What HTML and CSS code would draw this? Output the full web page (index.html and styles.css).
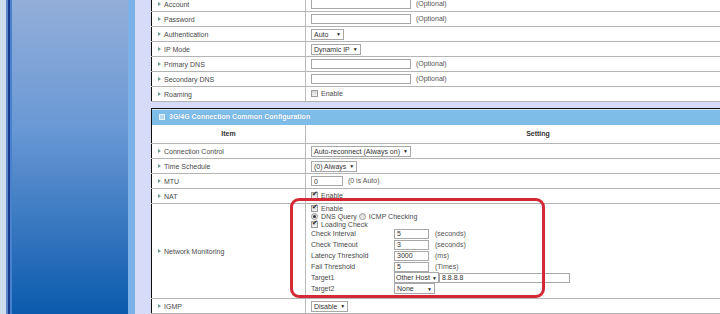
FILE: index.html
```html
<!DOCTYPE html>
<html lang="en">
<head>
    <meta charset="UTF-8">
    <title>3G/4G WAN Setting</title>
    <link rel="stylesheet" href="styles.css">
</head>
<body>
<div class="page">
    <div class="frame">
        <div class="menu"></div>
    </div>

    <div class="content">
        <table class="cfg cfg-top">
            <colgroup><col class="col-item"><col></colgroup>
            <tr>
                <td class="item">Account</td>
                <td class="setting"><input type="text" class="txt txt-long"> <span class="hint">(Optional)</span></td>
            </tr>
            <tr>
                <td class="item">Password</td>
                <td class="setting"><input type="password" class="txt txt-long"> <span class="hint">(Optional)</span></td>
            </tr>
            <tr>
                <td class="item">Authentication</td>
                <td class="setting"><span class="select sel-auth">Auto</span></td>
            </tr>
            <tr>
                <td class="item">IP Mode</td>
                <td class="setting"><span class="select">Dynamic IP</span></td>
            </tr>
            <tr>
                <td class="item">Primary DNS</td>
                <td class="setting"><input type="text" class="txt txt-long"> <span class="hint">(Optional)</span></td>
            </tr>
            <tr>
                <td class="item">Secondary DNS</td>
                <td class="setting"><input type="text" class="txt txt-long"> <span class="hint">(Optional)</span></td>
            </tr>
            <tr>
                <td class="item">Roaming</td>
                <td class="setting"><label class="opt"><input type="checkbox"> Enable</label></td>
            </tr>
        </table>

        <table class="cfg cfg-common">
            <colgroup><col class="col-item"><col></colgroup>
            <tr>
                <th colspan="2" class="title"><span class="title-icon"></span>3G/4G Connection Common Configuration</th>
            </tr>
            <tr class="heads">
                <th>Item</th>
                <th>Setting</th>
            </tr>
            <tr>
                <td class="item">Connection Control</td>
                <td class="setting"><span class="select">Auto-reconnect (Always on)</span></td>
            </tr>
            <tr>
                <td class="item">Time Schedule</td>
                <td class="setting"><span class="select">(0) Always</span></td>
            </tr>
            <tr>
                <td class="item">MTU</td>
                <td class="setting"><input type="text" class="txt txt-mtu" value="0"> <span class="hint">(0 is Auto)</span></td>
            </tr>
            <tr>
                <td class="item">NAT</td>
                <td class="setting"><label class="opt"><input type="checkbox" checked> Enable</label></td>
            </tr>
            <tr class="monitor">
                <td class="item">Network Monitoring</td>
                <td class="setting">
                    <div class="mark"></div>
                    <div class="line"><label class="opt"><input type="checkbox" checked> Enable</label></div>
                    <div class="line">
                        <label class="opt"><input type="radio" name="probe" checked> DNS Query</label>
                        <label class="opt"><input type="radio" name="probe"> ICMP Checking</label>
                    </div>
                    <div class="line"><label class="opt"><input type="checkbox" checked> Loading Check</label></div>
                    <div class="sub">
                        <span>Check Interval</span><input type="text" class="txt txt-num" value="5"><span class="hint">(seconds)</span>
                        <span>Check Timeout</span><input type="text" class="txt txt-num" value="3"><span class="hint">(seconds)</span>
                        <span>Latency Threshold</span><input type="text" class="txt txt-num" value="3000"><span class="hint">(ms)</span>
                        <span>Fail Threshold</span><input type="text" class="txt txt-num" value="5"><span class="hint">(Times)</span>
                        <span>Target1</span><span class="select sel-host">Other Host</span><input type="text" class="txt txt-host" value="8.8.8.8">
                        <span>Target2</span><span class="select sel-target">None</span><span></span>
                    </div>
                </td>
            </tr>
            <tr>
                <td class="item">IGMP</td>
                <td class="setting"><span class="select">Disable</span></td>
            </tr>
        </table>
    </div>
</div>
</body>
</html>
```

FILE: styles.css
```css
body {
    margin: 0;
    font-family: "Liberation Sans", Arial, sans-serif;
    font-size: 7px;
    color: #4a4a4a;
    background: #d6dcf8;
    overflow: hidden;
}
.page {
    display: flex;
    height: 314px;
}
.frame {
    flex: none;
    display: flex;
    padding-left: 6px;
    background: #cfdcee;
}
.menu {
    width: 122px;
    border-right: 7px solid #7cb0e8;
    background: linear-gradient(#93aed9, #6a99d5 40%, #0b5aad);
    box-shadow: inset 2px 0 #5b86c9, inset 4px 0 #173a8c, inset 6px 0 #4a80d0;
}
.content {
    padding-left: 16px;
    margin-top: -4px;
}

/* tables */
.cfg {
    width: 620px;
    table-layout: fixed;
    border-collapse: collapse;
    border: 1px solid #111;
    background: #fff;
}
.cfg-common {
    margin-top: 6px;
}
.col-item {
    width: 154px;
}
.cfg td {
    height: 14px;
    padding: 0;
    border-bottom: 1px solid #b4b4b4;
    vertical-align: middle;
}
.cfg .item {
    padding-left: 12px;
    border-right: 1px solid #bbb;
    position: relative;
}
.item::before {
    content: "";
    position: absolute;
    left: 6px;
    top: 50%;
    margin-top: -2px;
    border-left: 3px solid #6f9a96;
    border-top: 2px solid transparent;
    border-bottom: 2px solid transparent;
}
.cfg .setting {
    padding-left: 5px;
}
.title {
    padding: 0 0 0 7px;
    line-height: 16px;
    text-align: left;
    color: #fff;
    font-weight: bold;
    background: #7fbde9;
    box-shadow: inset 0 1px #d6e8f6;
    text-shadow: 0 0 1px #5d97c4;
}
.title-icon {
    display: inline-block;
    width: 4px;
    height: 4px;
    margin-right: 4px;
    border: 1px solid #e8f2fb;
    background: #b9d9f0;
    vertical-align: -1px;
}
.heads th {
    padding: 0;
    line-height: 18px;
    font-weight: bold;
    color: #333;
    border-bottom: 1px solid #b4b4b4;
}
.heads th:first-child {
    border-right: 1px solid #bbb;
}

/* form bits */
.txt {
    box-sizing: border-box;
    height: 10px;
    margin: 0;
    padding: 0 2px;
    border: 1px solid #a8a8a8;
    font: 7px "Liberation Sans", Arial, sans-serif;
    color: #333;
    vertical-align: middle;
}
.txt-long {
    width: 100px;
}
.txt-mtu {
    width: 32px;
}
.txt-num {
    width: 35px;
}
.txt-host {
    width: 131px;
    margin-left: 4px;
}
.hint {
    color: #555;
    margin-left: 3px;
}
.select {
    display: inline-flex;
    align-items: center;
    justify-content: space-between;
    box-sizing: border-box;
    height: 11px;
    padding: 0 2px;
    border: 1px solid #a8a8a8;
    background: #fff;
    color: #333;
    white-space: nowrap;
    vertical-align: middle;
}
.select::after {
    content: "\25BC";
    font-size: 5px;
    margin-left: 3px;
    color: #222;
}
.sel-auth {
    width: 33px;
}
.sel-target {
    width: 41px;
}
.sel-host {
    width: 45px;
    padding: 0 1px;
}
.sel-host::after {
    margin-left: 1px;
}
.opt {
    display: inline-flex;
    align-items: center;
    margin-right: 2px;
}
.opt input {
    appearance: none;
    position: relative;
    box-sizing: border-box;
    width: 7px;
    height: 7px;
    margin: 0 3px 0 0;
    border: 1px solid #9c9c9c;
    background: linear-gradient(#d8d8d8, #f2f2f2);
}
.opt input[type="radio"] {
    border-radius: 50%;
}
.opt input[type="checkbox"]:checked::after {
    content: "\2714";
    position: absolute;
    left: 0;
    top: -3px;
    font-size: 7px;
    color: #222;
}
.opt input[type="radio"]:checked::after {
    content: "";
    position: absolute;
    left: 1px;
    top: 1px;
    width: 3px;
    height: 3px;
    border-radius: 50%;
    background: #333;
}

/* network monitoring */
.cfg .monitor .setting {
    position: relative;
    padding-top: 0;
    padding-bottom: 4px;
    height: auto;
}
.line {
    height: 8px;
    display: flex;
    align-items: center;
}
.sub {
    display: grid;
    grid-template-columns: 83px 41px auto;
    grid-auto-rows: 11px;
    align-items: center;
    justify-items: start;
}
.sub .hint {
    margin-left: 0;
}
.mark {
    position: absolute;
    left: -16px;
    top: -6px;
    width: 255px;
    height: 100px;
    box-sizing: border-box;
    border: 3px solid #d42a35;
    border-radius: 9px;
    pointer-events: none;
}
```
